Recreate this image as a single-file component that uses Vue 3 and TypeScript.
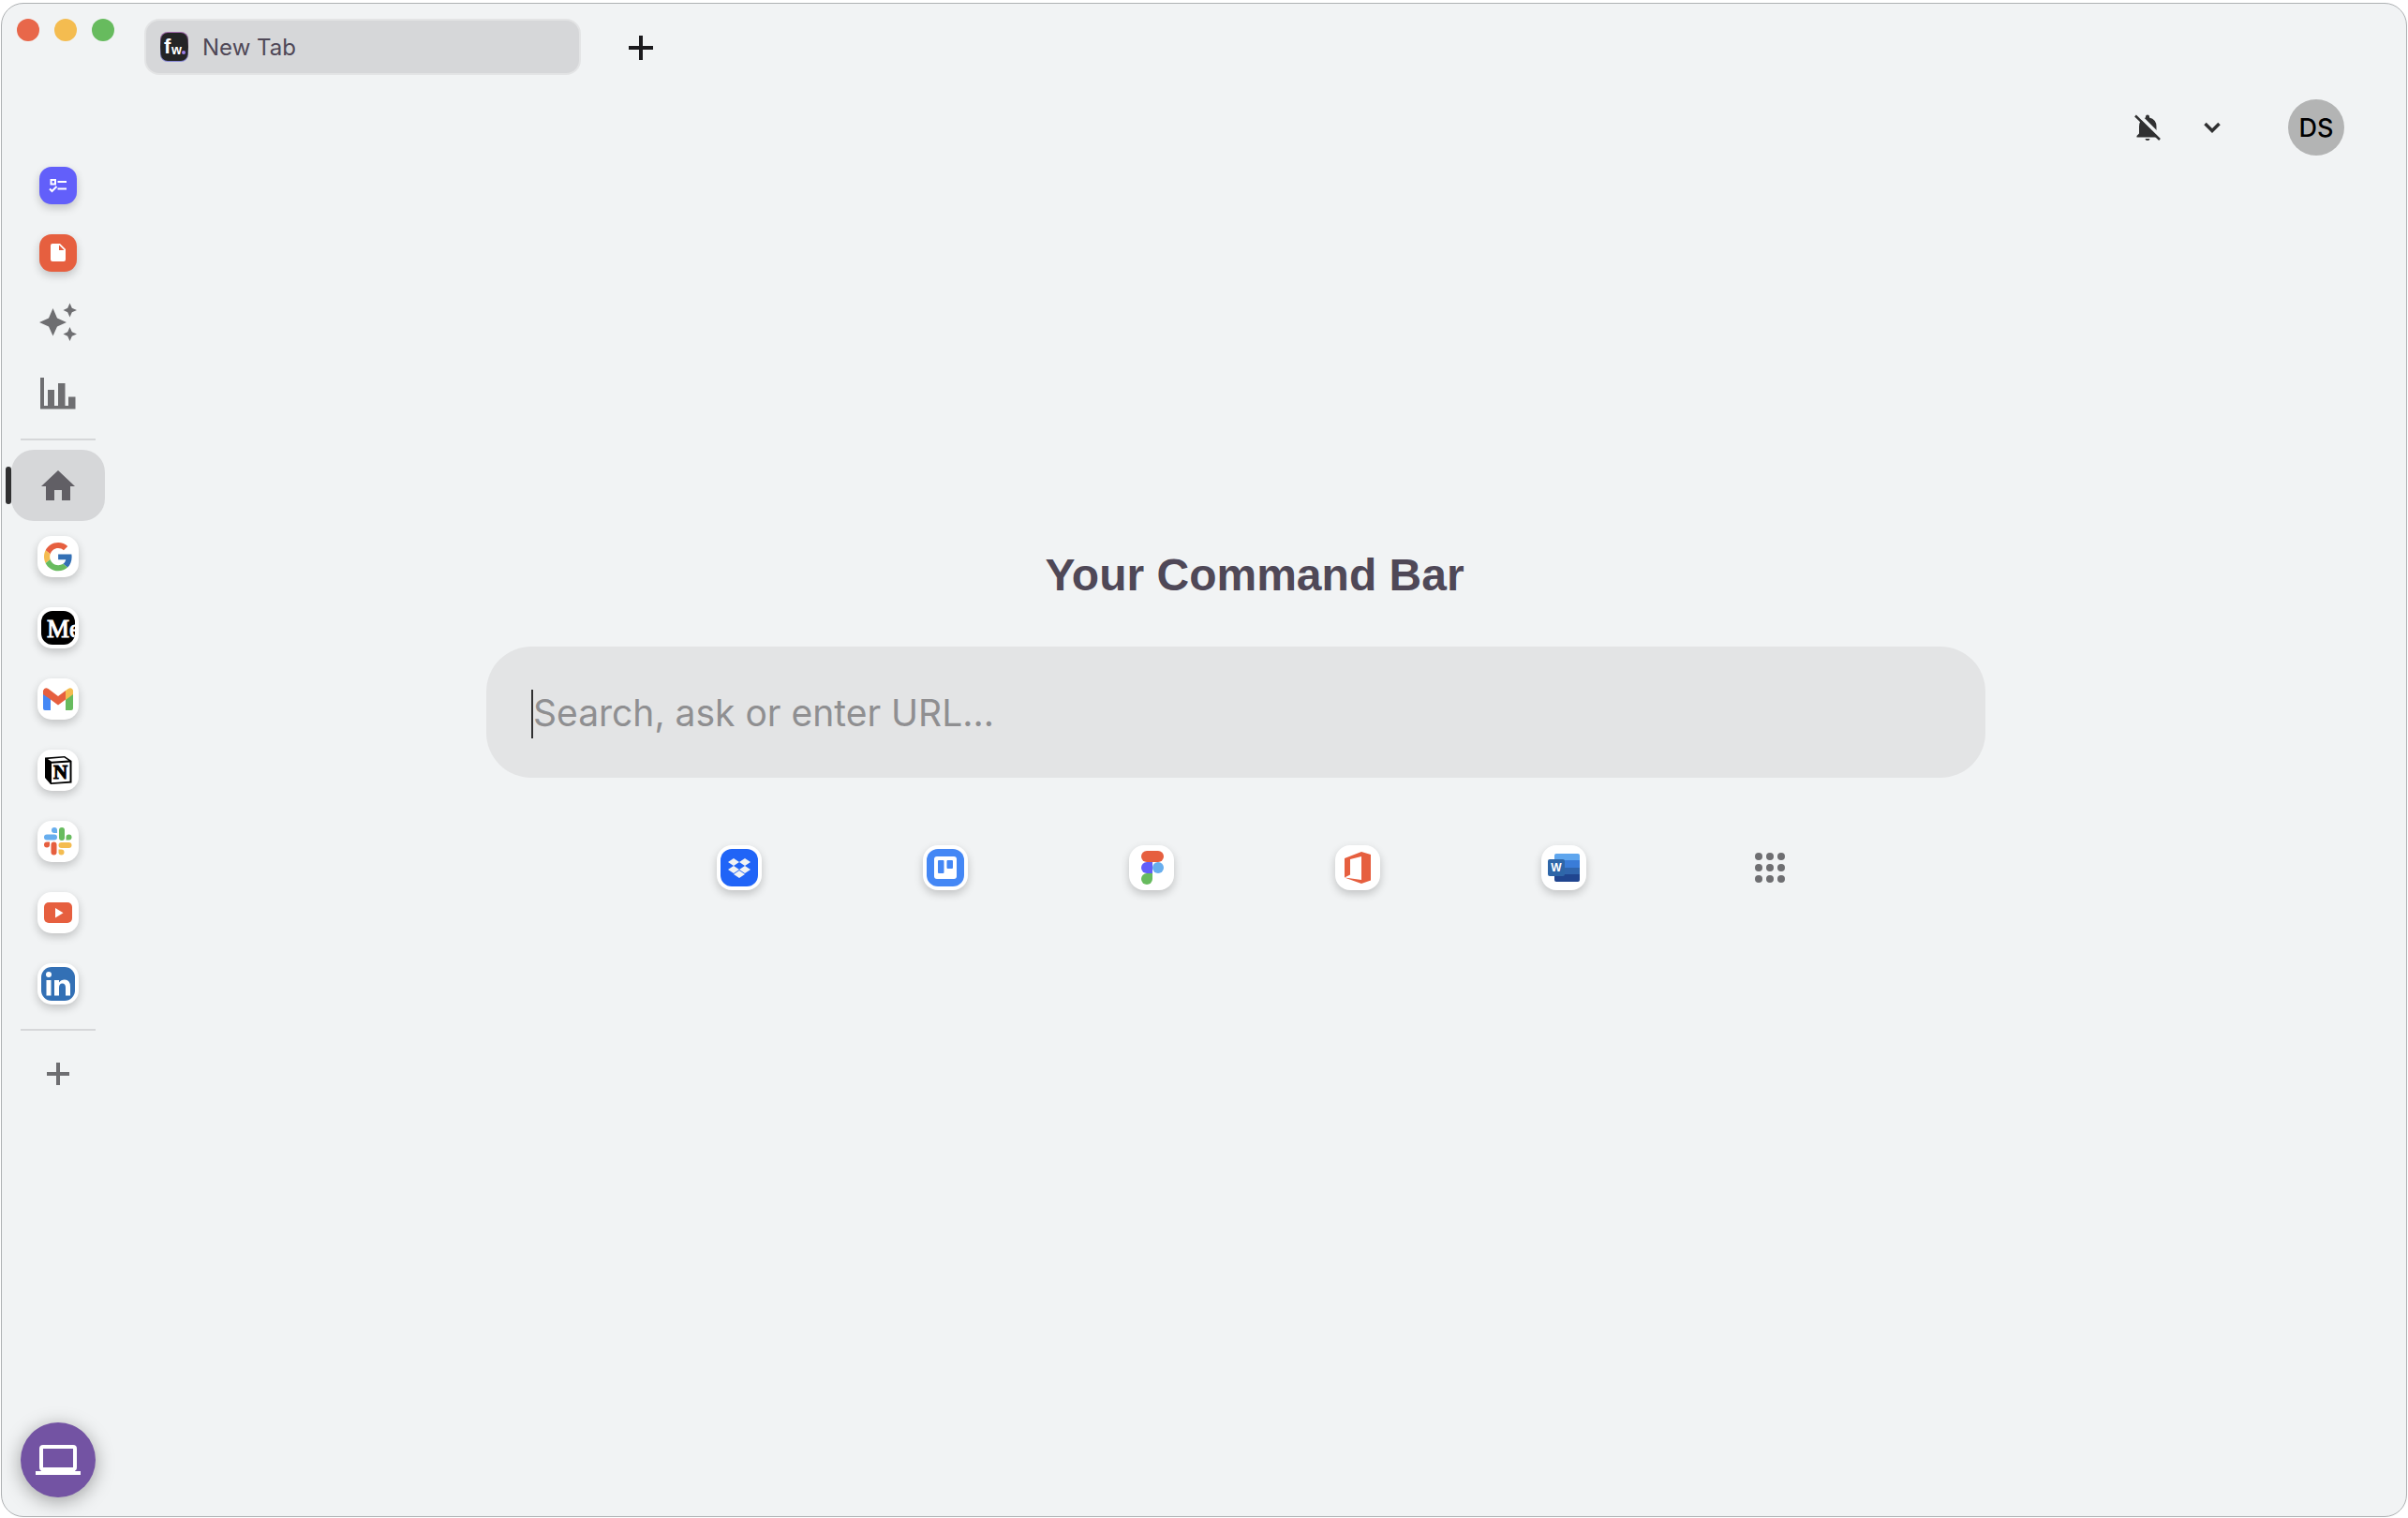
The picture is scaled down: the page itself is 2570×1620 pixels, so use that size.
<script setup lang="ts">
import { ref } from 'vue'

const query = ref('')
const lights = ['close', 'minimize', 'maximize']
const apps = ['Google', 'Medium', 'Gmail', 'Notion', 'Slack', 'YouTube', 'LinkedIn']
const shortcuts = ['Dropbox', 'Trello', 'Figma', 'Office', 'Word']
const dots = [6, 18, 30]
</script>

<template>
  <div class="window">
    <header class="titlebar">
      <div class="lights">
        <button v-for="l in lights" :key="l" type="button" :class="['light', l]" :aria-label="l"></button>
      </div>
      <button type="button" class="tab">
        <svg class="favicon" width="32" height="32" viewBox="0 0 32 32" aria-hidden="true">
          <defs>
            <linearGradient id="fav" x1="0" y1="0" x2="0" y2="1">
              <stop offset="0" stop-color="#a56bb0" />
              <stop offset="0.5" stop-color="#2b2b30" />
              <stop offset="1" stop-color="#8f90e0" />
            </linearGradient>
          </defs>
          <rect x="1" y="0" width="30" height="32" rx="8" fill="url(#fav)" />
          <rect x="2" y="1" width="28" height="30" rx="7" fill="#242426" />
          <text x="5" y="23" class="fav-f">f</text>
          <text x="13" y="24" class="fav-w">w</text>
          <circle cx="26" cy="22" r="2" fill="#9b7fe8" />
        </svg>
        <span>New Tab</span>
      </button>
      <button type="button" class="new-tab" aria-label="New tab">
        <svg width="26" height="26" viewBox="0 0 26 26"><path d="M13 0V26M0 13H26" stroke="#1b1a1d" stroke-width="4" /></svg>
      </button>
    </header>

    <div class="body">
      <nav class="sidebar" aria-label="Apps">
        <button type="button" class="item short" aria-label="Tasks">
          <span class="tile small tasks">
            <svg width="40" height="40" viewBox="0 0 40 40" fill="none" stroke="#fff" stroke-width="2">
              <rect x="12.5" y="14" width="4.5" height="4.5" />
              <path d="M19.500 16H29M19.500 23.500H29M11 23.500 13.500 26 18.500 21" />
            </svg>
          </span>
        </button>
        <button type="button" class="item short" aria-label="Documents">
          <span class="tile small docs">
            <svg width="40" height="40" viewBox="0 0 40 40">
              <path d="M14 10H22L28 16V27Q28 29 26 29H14Q12 29 12 27V12Q12 10 14 10Z" fill="#fff" />
              <path d="M21 11.500V17H26.500Z" fill="#e65f3f" />
            </svg>
          </span>
        </button>
        <button type="button" class="item" aria-label="Assistant">
          <svg width="40" height="42" viewBox="0 0 40 42" fill="#6e6e71">
            <path d="M14.500 6 19 16.500 29 21 19 25.500 14.500 35.500 10 25.500 0 21 10 16.500Z" />
            <path d="M32.500 .5 34.800 5.700 40 8 34.800 10.300 32.500 15.500 30.200 10.300 25.500 8 30.200 5.700Z" />
            <path d="M32.500 26 34.800 31.200 40 33.500 34.800 35.800 32.500 41 30.200 35.800 25.500 33.500 30.200 31.200Z" />
          </svg>
        </button>
        <button type="button" class="item" aria-label="Statistics">
          <svg width="38" height="34" viewBox="0 0 38 34" fill="#6e6e71">
            <path d="M0 0H4V30H8V13H15V30H19V6H26.500V30H30V20.500H37.500V33.500H0Z" />
          </svg>
        </button>
        <hr class="divider">
        <button type="button" class="item active" aria-label="Home" aria-current="page">
          <svg width="36" height="32" viewBox="0 0 36 32" fill="#615f65">
            <path d="M18 0 36 17H31V32H22V21H14V32H5V17H0Z" />
          </svg>
        </button>
        <button v-for="app in apps" :key="app" type="button" class="item" :aria-label="app">
          <span class="tile">
            <svg width="44" height="44" viewBox="0 0 44 44">
              <g v-if="app === 'Google'" transform="translate(7 7) scale(.63)">
                <path fill="#e65f3f" d="M24 9.500c3.540 0 6.710 1.220 9.210 3.600l6.850-6.850C35.900 2.380 30.470 0 24 0 14.620 0 6.510 5.380 2.560 13.220l7.980 6.190C12.430 13.720 17.740 9.500 24 9.500z" />
                <path fill="#3370b5" d="M46.980 24.550c0-1.570-.15-3.090-.38-4.550H24v9.020h12.940c-.58 2.960-2.260 5.480-4.780 7.180l7.730 6c4.510-4.180 7.090-10.360 7.090-17.650z" />
                <path fill="#f4bc50" d="M10.530 28.590c-.48-1.450-.76-2.990-.76-4.590s.27-3.140.76-4.590l-7.980-6.190C.92 16.460 0 20.120 0 24c0 3.880.92 7.540 2.560 10.780l7.970-6.190z" />
                <path fill="#67bb5e" d="M24 48c6.480 0 11.930-2.130 15.890-5.810l-7.730-6c-2.150 1.450-4.920 2.300-8.160 2.300-6.260 0-11.570-4.220-13.470-9.910l-7.980 6.190C6.510 42.620 14.620 48 24 48z" />
              </g>
              <g v-else-if="app === 'Medium'">
                <clipPath id="medium"><rect x="4" y="4" width="36" height="36" rx="12" /></clipPath>
                <rect x="4" y="4" width="36" height="36" rx="12" fill="#000" />
                <g clip-path="url(#medium)"><text x="10" y="32" class="medium">Me</text></g>
              </g>
              <g v-else-if="app === 'Gmail'">
                <path d="M6 16V32Q6 34 8 34H14V21Z" fill="#4487f5" />
                <path d="M30 21V34H36Q38 34 38 32V16Z" fill="#67bb5e" />
                <path d="M30 13 32.500 11.200Q36 9 38 12.500V17L30 23Z" fill="#f4bc50" />
                <path d="M6 17V13Q7.500 9 11.500 11L22 19 30 13V22.500L22 28.500 14 22.500Z" fill="#e65f3f" />
              </g>
              <g v-else-if="app === 'Notion'">
                <path d="M8 8.500 29 7 36.500 12V35.500L14 37 8 30Z" fill="#000" />
                <path d="M11 10 28.500 8.500 33 11.500 15 12.800Z" fill="#fff" />
                <path d="M15 14.800 34.500 13.500V33.800L15 35.200Z" fill="#fff" />
                <text x="17" y="31" class="notion">N</text>
              </g>
              <g v-else-if="app === 'Slack'">
                <g fill="#68aeee"><rect x="7" y="14.500" width="14" height="6" rx="3" /><path d="M18 7A3 3 0 0 1 21 10V13H18A3 3 0 0 1 18 7Z" /></g>
                <g fill="#67bb5e"><rect x="23" y="7" width="6" height="14" rx="3" /><path d="M30.500 20.500V17.500A3 3 0 1 1 33.500 20.500Z" /></g>
                <g fill="#e65f3f"><rect x="14.500" y="22.500" width="6" height="14" rx="3" /><path d="M13 22.500V25.500A3 3 0 1 1 10 22.500Z" /></g>
                <g fill="#f4bc50"><rect x="22.500" y="23" width="14" height="6" rx="3" /><path d="M22.500 30.500H25.500A3 3 0 1 1 22.500 33.500Z" /></g>
              </g>
              <g v-else-if="app === 'YouTube'">
                <rect x="7" y="11" width="30" height="22" rx="5" fill="#e65f3f" />
                <path d="M19 17V27.500L27.500 22.200Z" fill="#fff" />
              </g>
              <g v-else>
                <rect x="4" y="4" width="36" height="36" rx="11" fill="#3370b5" />
                <circle cx="12" cy="12" r="3" fill="#fff" />
                <path d="M9.500 18H14.500V34.500H9.500ZM18 18H23V20.500Q25 17.500 29 17.500 35 17.500 35 25V34.500H30V26Q30 21.500 26.500 21.500 23 21.500 23 26V34.500H18Z" fill="#fff" />
              </g>
            </svg>
          </span>
        </button>
        <hr class="divider">
        <button type="button" class="item short" aria-label="Add app">
          <svg width="24" height="24" viewBox="0 0 24 24"><path d="M12 0V24M0 12H24" stroke="#6e6e71" stroke-width="4" /></svg>
        </button>
        <button type="button" class="fab" aria-label="Workspace">
          <svg width="48" height="32" viewBox="0 0 48 32">
            <rect x="6" y="2" width="36" height="24" rx="2" fill="none" stroke="#fff" stroke-width="4" />
            <path d="M0 28H6V26H42V28H48V32H0Z" fill="#fff" />
          </svg>
        </button>
      </nav>

      <main class="main">
        <div class="account">
          <button type="button" class="mute" aria-label="Notifications off">
            <svg width="28" height="28" viewBox="0 0 28 28">
              <path d="M12 2.500Q12 .5 14 .5T16 2.500V3.500Q23.500 5.500 23.500 13V21L25.500 23V24.500H2.500V23L5 20.500V13Q5 5.500 12 3.500Z" fill="#303031" />
              <path d="M11.500 26H16.500Q16.500 28 14 28T11.500 26Z" fill="#303031" />
              <path d="M3 -1 30 26" stroke="#f1f3f4" stroke-width="4" />
              <path d="M1 1.500 27 27" stroke="#303031" stroke-width="2.500" />
            </svg>
          </button>
          <button type="button" class="more" aria-label="Notification options">
            <svg width="18" height="12" viewBox="0 0 18 12"><path d="M1.500 2 9 9.500 16.500 2" fill="none" stroke="#303031" stroke-width="3.500" /></svg>
          </button>
          <button type="button" class="avatar" aria-label="Profile DS">DS</button>
        </div>

        <section class="command">
          <h1>Your Command Bar</h1>
          <div class="search">
            <span class="caret"></span>
            <input v-model="query" type="text" aria-label="Command" placeholder="Search, ask or enter URL...">
          </div>
          <div class="shortcuts">
            <button v-for="s in shortcuts" :key="s" type="button" class="shortcut" :aria-label="s">
              <span class="tile big">
                <svg width="48" height="48" viewBox="0 0 48 48">
                  <g v-if="s === 'Dropbox'">
                    <rect x="4" y="4" width="40" height="40" rx="12" fill="#2064f7" />
                    <path d="M18 14 24 18 18 22 12 18ZM30 14 36 18 30 22 24 18ZM18 22 24 26 18 30 12 26ZM30 22 36 26 30 30 24 26ZM24 27 30 31 24 35 18 31Z" fill="#f1f3f4" />
                  </g>
                  <g v-else-if="s === 'Trello'">
                    <rect x="4" y="4" width="40" height="40" rx="12" fill="#4487f5" />
                    <rect x="12" y="12" width="24" height="24" rx="3" fill="#fff" />
                    <rect x="16" y="16" width="6.500" height="14" rx="1" fill="#4487f5" />
                    <rect x="25.500" y="16" width="6.500" height="9" rx="1" fill="#4487f5" />
                  </g>
                  <g v-else-if="s === 'Figma'">
                    <rect x="13" y="6" width="24" height="12" rx="6" fill="#e65f3f" />
                    <path d="M19 18H25V30H19A6 6 0 0 1 19 18Z" fill="#625ffa" />
                    <circle cx="31" cy="24" r="6" fill="#68aeee" />
                    <path d="M19 30H25V36A6 6 0 1 1 19 30Z" fill="#67bb5e" />
                  </g>
                  <path v-else-if="s === 'Office'" d="M10 14 28 7 38 10V37.500L28 41 10 34.500 28 37V12L16 15V31.500L10 34.500Z" fill="#e65f3f" />
                  <g v-else>
                    <clipPath id="word"><rect x="14" y="9" width="27" height="30" rx="2" /></clipPath>
                    <g clip-path="url(#word)">
                      <rect x="14" y="9" width="27" height="7" fill="#5fa6ee" />
                      <rect x="14" y="16" width="27" height="8" fill="#3a7cd8" />
                      <rect x="14" y="24" width="27" height="7" fill="#3065ad" />
                      <rect x="14" y="31" width="27" height="8" fill="#20458f" />
                    </g>
                    <rect x="7" y="15" width="18" height="18" rx="2" fill="#2e66a8" />
                    <text x="16" y="28" text-anchor="middle" class="word">W</text>
                  </g>
                </svg>
              </span>
            </button>
            <button type="button" class="shortcut" aria-label="All apps">
              <svg width="36" height="36" viewBox="0 0 36 36" fill="#6e6e71">
                <template v-for="y in dots" :key="y">
                  <circle v-for="x in dots" :key="x" :cx="x" :cy="y" r="4" />
                </template>
              </svg>
            </button>
          </div>
        </section>
      </main>
    </div>
  </div>
</template>

<style>
body {
  background: #fff;
}
#app {
  padding: 3px 1px 1px;
}
</style>

<style scoped>
.window {
  box-sizing: border-box;
  min-height: calc(100vh - 4px);
  display: flex;
  flex-direction: column;
  border: 1px solid #aeb1b3;
  border-radius: 24px;
  background: #f1f3f4;
  font-family: Inter, "Liberation Sans", Arial, sans-serif;
  overflow: hidden;
}
button {
  display: flex;
  align-items: center;
  justify-content: center;
  padding: 0;
  border: 0;
  background: none;
  font: inherit;
  color: inherit;
}
svg {
  display: block;
}
.titlebar {
  display: flex;
  align-items: flex-start;
  padding: 16px 16px 0;
}
.lights {
  display: flex;
  gap: 16px;
  width: 136px;
}
.light {
  width: 24px;
  height: 24px;
  border-radius: 50%;
}
.close { background: #e8674a; }
.minimize { background: #f4bc50; }
.maximize { background: #67bb5e; }
.tab {
  box-sizing: border-box;
  width: 466px;
  height: 60px;
  justify-content: flex-start;
  gap: 14px;
  padding: 0 14px;
  border: 2px solid #e3e4e5;
  border-radius: 16px;
  background: #d6d7d9;
  color: #4f4857;
  font-size: 24px;
}
.fav-f {
  font: bold 22px "Liberation Sans", Arial, sans-serif;
  fill: #fff;
}
.fav-w {
  font: bold 14px "Liberation Sans", Arial, sans-serif;
  fill: #fff;
}
.new-tab {
  width: 60px;
  height: 62px;
  margin-left: 34px;
}
.body {
  flex: 1;
  display: flex;
}
.sidebar {
  display: flex;
  flex-direction: column;
  align-items: center;
  width: 120px;
  padding: 80px 0 20px;
}
.item {
  position: relative;
  flex: none;
  width: 100px;
  height: 76px;
}
.short {
  height: 72px;
}
.active {
  border-radius: 24px;
  background: #d6d7d9;
}
.active::before {
  content: "";
  position: absolute;
  left: -6px;
  top: 18px;
  width: 6px;
  height: 40px;
  border-radius: 3px;
  background: #303031;
}
.divider {
  flex: none;
  width: 80px;
  height: 2px;
  margin: 10px 0;
  border: 0;
  background: #d6d7d9;
}
.tile {
  width: 44px;
  height: 44px;
  border-radius: 15px;
  background: #fff;
  box-shadow: 0 4px 10px rgba(0, 0, 0, 0.2);
}
.small {
  width: 40px;
  height: 40px;
  border-radius: 13px;
}
.big {
  width: 48px;
  height: 48px;
  border-radius: 16px;
}
.tasks { background: #625ffa; }
.docs { background: #e65f3f; }
.medium {
  font: 27px "Liberation Serif", serif;
  fill: #fff;
  stroke: #fff;
  stroke-width: 1px;
}
.notion {
  font: bold 21px "Liberation Serif", serif;
  stroke: #000;
  stroke-width: 1px;
}
.word {
  font: bold 12px "Liberation Sans", Arial, sans-serif;
  fill: #fff;
}
.fab {
  width: 80px;
  height: 80px;
  margin-top: auto;
  border-radius: 50%;
  background: #7353a3;
  box-shadow: 0 4px 20px rgba(0, 0, 0, 0.35);
}
.main {
  flex: 1;
  padding-right: 12px;
}
.account {
  display: flex;
  align-items: center;
  justify-content: flex-end;
  padding: 24px 54px 0 0;
}
.more {
  margin: 0 72px 0 46px;
}
.avatar {
  width: 60px;
  height: 60px;
  border-radius: 50%;
  background: #b3b4b4;
  color: #000;
  font-size: 27px;
  font-weight: 500;
}
.command {
  display: flex;
  flex-direction: column;
  align-items: center;
  padding-top: 420px;
}
h1 {
  margin: 0 0 48px;
  color: #4f4857;
  font-family: "Liberation Sans", Arial, sans-serif;
  font-size: 48px;
  line-height: 56px;
}
.search {
  box-sizing: border-box;
  display: flex;
  align-items: center;
  width: 100%;
  max-width: 1600px;
  height: 140px;
  margin-right: 40px;
  padding: 0 48px;
  border-radius: 48px;
  background: #e3e4e5;
}
.caret {
  width: 2px;
  height: 52px;
  margin-top: 4px;
  background: #303031;
}
input {
  flex: 1;
  height: 60px;
  padding: 0;
  border: 0;
  outline: none;
  background: none;
  font: inherit;
  font-size: 39px;
  color: #303031;
}
input::placeholder {
  color: #8f8f91;
  opacity: 1;
}
.shortcuts {
  display: flex;
  margin-top: 68px;
}
.shortcut {
  width: 220px;
  height: 56px;
}
</style>
